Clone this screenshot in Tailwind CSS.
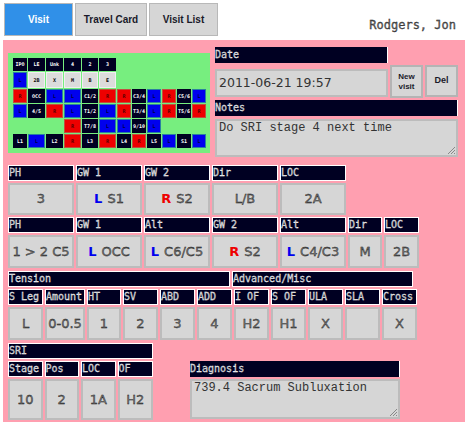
<!DOCTYPE html>
<html lang="en">
<head>
    <meta charset="UTF-8">
    <title>Visit</title>
    <script src="https://cdn.jsdelivr.net/npm/@tailwindcss/browser@4"></script>
</head>
<body class="bg-white w-[468px] h-[425px] overflow-hidden font-['DejaVu_Sans_Mono',monospace]">
    <!-- Tabs -->
    <div class="flex items-start h-[40px] pt-[3px] pl-[4px] gap-[2px] font-['Liberation_Sans',sans-serif] font-bold text-[10px]">
        <div class="w-[69px] h-[33px] flex items-center justify-center bg-[#3090e8] border border-[#b8b8b8] text-white">Visit</div>
        <div class="w-[72px] h-[33px] flex items-center justify-center bg-[#d6d6d6] border border-[#b8b8b8] text-[#1a1a2a]">Travel Card</div>
        <div class="w-[69px] h-[33px] flex items-center justify-center bg-[#d6d6d6] border border-[#b8b8b8] text-[#1a1a2a]">Visit List</div>
        <div class="ml-auto mr-[12px] mt-[13px] font-['DejaVu_Sans_Mono',monospace] font-normal text-[12px] text-[#666] [-webkit-text-stroke:0.3px_#111]">Rodgers, Jon</div>
    </div>

    <!-- Main panel -->
    <div class="ml-[3px] w-[462px] h-[382px] bg-[#ff9fb0] pl-[5px] pt-[7px] flex flex-col">
        <div class="flex h-[111px] mb-[7px]">
            <!-- Spine grid -->
            <div class="w-[202px] h-[100px] mt-[6px] bg-[#77ee7f] pl-[5px] pt-[5px]">
                <div id="spine" class="grid grid-cols-[14px_17px_17px_17px_16px_17px_14px_14px_14px_14px_14px_14px] grid-rows-[13px_16px_14px_14px_14px_14px] gap-[1px] text-[5px] font-bold text-center leading-none"></div>
            </div>

            <!-- Date and notes -->
            <div class="ml-[5px] w-[243px] flex flex-col">
                <div class="flex gap-[2px] h-[51px]">
                    <div class="w-[173px] flex flex-col">
                        <div class="h-[16px] bg-[#000022] border-r border-white text-[#aaa] text-[10px] leading-[16px] [-webkit-text-stroke:0.3px_#fff]">Date</div>
                        <div class="mt-[6px] h-[28px] bg-[#d6d6d6] border-2 border-[#bcbcbc] text-[12.5px] leading-[24px] pl-[2px] text-[#333] font-['DejaVu_Sans',sans-serif]">2011-06-21 19:57</div>
                    </div>
                    <div class="w-[33px] h-[33px] mt-[18px] bg-[#d6d6d6] border-2 border-[#b4b4b4] flex items-center justify-center text-center text-[8px] font-bold leading-[10px] text-[#1a1a2a] font-['Liberation_Sans',sans-serif]">New<br>visit</div>
                    <div class="w-[33px] h-[32px] mt-[18px] bg-[#d6d6d6] border-2 border-[#b4b4b4] flex items-center justify-center text-[9px] font-bold text-[#1a1a2a] font-['Liberation_Sans',sans-serif]">Del</div>
                </div>
                <div class="mt-[2px] h-[16px] bg-[#000022] border-r border-white text-[#aaa] text-[10px] leading-[16px] [-webkit-text-stroke:0.3px_#fff]">Notes</div>
                <div class="relative mt-[3px] h-[38px] bg-[#d6d6d6] border-2 border-[#bcbcbc] text-[12px] pl-[2px] leading-[14px] text-[#333] font-['Liberation_Mono',monospace]">Do SRI stage 4 next time
                    <svg class="absolute right-0 bottom-0" width="9" height="9" viewBox="0 0 9 9"><path d="M1 8 8 1M4 8 8 4M7 8 8 7" stroke="#888" fill="none"/></svg>
                </div>
            </div>
        </div>

        <div id="rowA" class="flex gap-[2px] mb-[2px]"></div>
        <div id="rowB" class="flex gap-[2px] mb-[3px]"></div>

        <!-- Tension / Advanced -->
        <div class="flex gap-[2px] mb-[2px]">
            <div class="w-[222px] h-[16px] bg-[#000022] border border-white text-[#aaa] text-[10px] leading-[14px] [-webkit-text-stroke:0.3px_#fff]">Tension</div>
            <div class="w-[181px] h-[16px] bg-[#000022] border border-white text-[#aaa] text-[10px] leading-[14px] [-webkit-text-stroke:0.3px_#fff]">Advanced/Misc</div>
        </div>
        <div id="rowC" class="flex gap-[2px] mb-[3px]"></div>

        <!-- SRI and diagnosis -->
        <div class="flex">
            <div class="w-[145px] flex flex-col gap-[2px]">
                <div class="h-[16px] bg-[#000022] border border-white text-[#aaa] text-[10px] leading-[14px] [-webkit-text-stroke:0.3px_#fff]">SRI</div>
                <div id="rowD" class="flex gap-[2px]"></div>
            </div>
            <div class="ml-[37px] mt-[18px] w-[210px] flex flex-col gap-[2px]">
                <div class="h-[16px] bg-[#000022] border-r border-white text-[#aaa] text-[10px] leading-[16px] [-webkit-text-stroke:0.3px_#fff]">Diagnosis</div>
                <div class="relative h-[40px] bg-[#d6d6d6] border-2 border-[#bcbcbc] text-[12px] pl-[2px] leading-[14px] text-[#333] font-['Liberation_Mono',monospace]">739.4 Sacrum Subluxation
                    <svg class="absolute right-0 bottom-0" width="9" height="9" viewBox="0 0 9 9"><path d="M1 8 8 1M4 8 8 4M7 8 8 7" stroke="#888" fill="none"/></svg>
                </div>
            </div>
        </div>
    </div>

    <script>
        const labelClass = 'h-[16px] bg-[#000022] border border-white text-[#aaa] text-[10px] leading-[14px] whitespace-nowrap overflow-hidden [-webkit-text-stroke:0.3px_#fff]';
        const valueClass = "bg-[#d6d6d6] border-2 border-[#bcbcbc] flex items-center justify-center text-[13px] text-[#777] whitespace-nowrap font-['DejaVu_Sans',sans-serif] [-webkit-text-stroke:0.35px_#111]";
        const heights = { a: 'h-[32px]', b: 'h-[33px]', c: 'h-[33px]', d: 'h-[41px]' };
        const widths = { 34: 'w-[34px]', 35: 'w-[35px]', 36: 'w-[36px]', 40: 'w-[40px]', 66: 'w-[66px]' };
        const sides = {
            L: 'text-[#0000ee] font-bold mr-[5px] [-webkit-text-stroke:0px]',
            R: 'text-[#ee0000] font-bold mr-[5px] [-webkit-text-stroke:0px]'
        };

        // [label, value, width, side]
        function fillRow(id, kind, cells) {
            const row = document.getElementById(id);
            cells.forEach(([label, value, width, side]) => {
                const col = document.createElement('div');
                col.className = widths[width] + ' flex flex-col gap-[2px]';
                const head = document.createElement('div');
                head.className = labelClass;
                head.textContent = label;
                const body = document.createElement('div');
                body.className = valueClass + ' ' + heights[kind];
                if (side) {
                    const s = document.createElement('span');
                    s.className = sides[side];
                    s.textContent = side;
                    body.appendChild(s);
                }
                body.appendChild(document.createTextNode(value));
                col.append(head, body);
                row.appendChild(col);
            });
        }

        fillRow('rowA', 'a', [['PH', '3', 66], ['GW 1', 'S1', 66, 'L'], ['GW 2', 'S2', 66, 'R'], ['Dir', 'L/B', 66], ['LOC', '2A', 66]]);
        fillRow('rowB', 'b', [['PH', '1 > 2 C5', 66], ['GW 1', 'OCC', 66, 'L'], ['Alt', 'C6/C5', 66, 'L'], ['GW 2', 'S2', 66, 'R'], ['Alt', 'C4/C3', 66, 'L'], ['Dir', 'M', 34], ['LOC', '2B', 35]]);
        fillRow('rowC', 'c', [['S Leg', 'L', 35], ['Amount', '0-0.5', 40], ['HT', '1', 34], ['SV', '2', 35], ['ABD', '3', 35], ['ADD', '4', 35], ['I OF', 'H2', 35], ['S OF', 'H1', 35], ['ULA', 'X', 35], ['SLA', '', 35], ['Cross', 'X', 35]]);
        fillRow('rowD', 'd', [['Stage', '10', 35], ['Pos', '2', 35], ['LOC', '1A', 35], ['OF', 'H2', 36]]);

        // Spine grid: d = dark label, g = grey, L/R = side, _ = empty slot
        const spineClass = {
            d: 'bg-[#000022] text-white flex items-center justify-center overflow-hidden',
            g: 'bg-[#dcdcdc] border border-[#f0f0f0] flex items-center justify-center',
            L: 'bg-[#0000ee] border border-[#2a80a0] flex items-center justify-center text-[#000044]',
            R: 'bg-[#ee0000] border border-[#c05040] flex items-center justify-center text-[#550000]',
            _: ''
        };
        const spine = [
            'd:IPO d:LE d:Unk d:4 d:2 d:3 _ _ _ _ _ _',
            'L g:2B g:X g:M g:B g:E _ _ _ _ _ _',
            'R d:OCC L L d:C1/2 R R d:C3/4 L R d:C5/6 L',
            'L d:4/5 R L d:T1/2 L R d:T3/4 L R d:T5/6 R',
            '_ _ _ R d:T7/8 L L d:9/10 L _ _ _',
            'd:L1 L d:L2 R d:L3 R d:L4 R d:L5 L d:S1 L'
        ];
        const grid = document.getElementById('spine');
        spine.forEach(line => line.split(' ').forEach(cell => {
            const [kind, text] = cell.split(':');
            const el = document.createElement('div');
            el.className = spineClass[kind];
            el.textContent = text || (kind === '_' ? '' : kind);
            grid.appendChild(el);
        }));
    </script>
</body>
</html>
